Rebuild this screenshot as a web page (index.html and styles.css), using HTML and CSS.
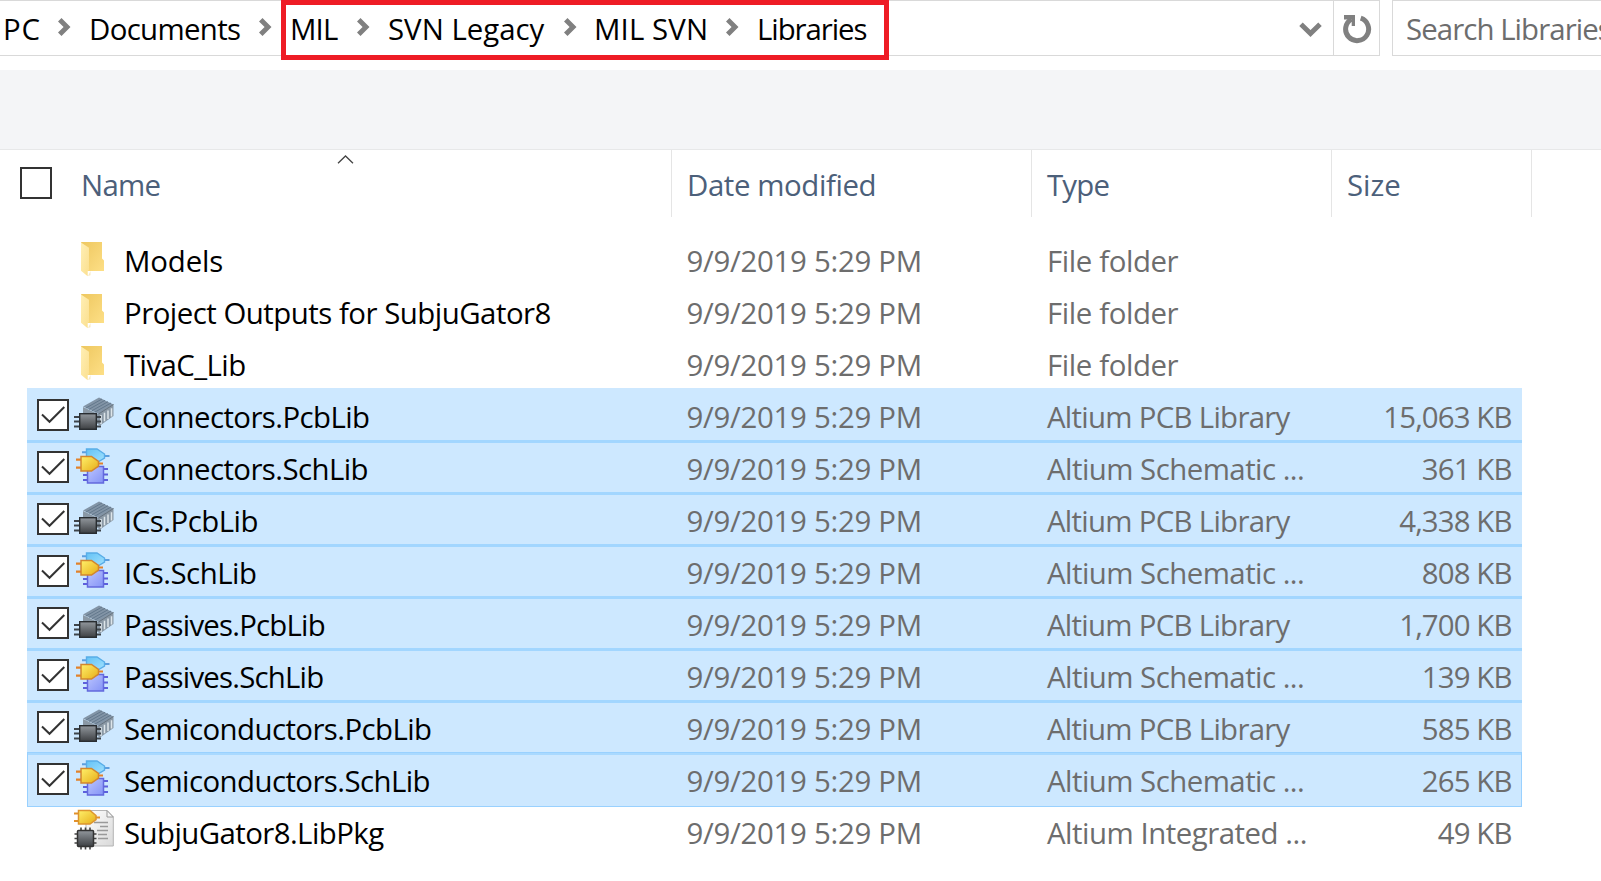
FILE: index.html
```html
<!DOCTYPE html>
<html lang="en">
<head>
<meta charset="utf-8">
<title>Libraries</title>
<link rel="stylesheet" href="styles.css">
</head>
<body>
<svg class="defs" width="0" height="0">
  <defs>
    <linearGradient id="gBack" x1="0" y1="0" x2="1" y2="1"><stop offset="0" stop-color="#eec75f"/><stop offset="1" stop-color="#fddf86"/></linearGradient>
    <linearGradient id="gFront" x1="0" y1="0" x2="1" y2="1"><stop offset="0" stop-color="#ffefb5"/><stop offset="1" stop-color="#fbdf8e"/></linearGradient>
    <linearGradient id="gChip" x1="0" y1="0" x2="0" y2="1"><stop offset="0" stop-color="#92979d"/><stop offset="1" stop-color="#3d4043"/></linearGradient>
    <linearGradient id="gGold" x1="0" y1="0" x2="1" y2="1"><stop offset="0" stop-color="#fff06a"/><stop offset="1" stop-color="#e6ad18"/></linearGradient>
    <linearGradient id="gSky" x1="0" y1="0" x2="1" y2="1"><stop offset="0" stop-color="#64c2f5"/><stop offset="1" stop-color="#a2e2ff"/></linearGradient>
    <linearGradient id="gBlue" x1="0" y1="0" x2="1" y2="1"><stop offset="0" stop-color="#bcc6ff"/><stop offset="1" stop-color="#8493f6"/></linearGradient>
    <linearGradient id="gPage" x1="0" y1="0" x2="1" y2="1"><stop offset="0" stop-color="#ffffff"/><stop offset="1" stop-color="#d9d9d9"/></linearGradient>
    <symbol id="chev" viewBox="0 0 13 18"><path fill="#808080" d="M3.5 0l9 9-9 9L0 14.5 5.6 9 0 3.5z"/></symbol>
    <symbol id="check" viewBox="0 0 32 32"><rect x="1" y="1" width="30" height="30" fill="#fff" stroke="#333" stroke-width="2"/><path d="M5 15.500l7.500 7.300L27.300 8" fill="none" stroke="#333" stroke-width="2"/></symbol>
    <symbol id="folder" viewBox="0 0 50 50">
      <path fill="url(#gBack)" d="M11 10h21v16.500l2 2V39H18z"/>
      <path fill="#f7e9c4" d="M18 44l2.500-.7V39z"/>
      <path fill="url(#gFront)" d="M11 10.500l8 5.300V38l-1.300 1v5.200L11 38.800z"/>
    </symbol>
    <symbol id="pcb" viewBox="0 0 50 50">
      <path fill="#8a98a5" d="M13 19l15 7 15.500-9.500V28L30 37.500 13 27z"/>
      <path fill="#8294a6" d="M13 18.500L29 9.500l14.500 7L28.500 26z"/>
      <path stroke="#63788c" stroke-width="1" fill="none" d="M16 20l16-9M19 21.300l16-9M22 22.700l16-9M25 24l16-9"/>
      <path stroke="#66727d" stroke-width="1" fill="none" d="M28.500 26l15-9.500"/>
      <path stroke="#dde5ea" stroke-width="1.500" fill="none" d="M31 27v9M34.500 24.700v8.500M38 22.500V31M41.500 20.300v8.200"/>
      <path stroke="#3e444a" stroke-width="2" d="M4 29h6M4 33.500h6M4 38.500h6M26 29h5M26 33.500h5M26 38.500h5"/>
      <rect x="9.700" y="25.700" width="16.600" height="15.600" fill="url(#gChip)" stroke="#292d31" stroke-width="1.400"/>
    </symbol>
    <symbol id="gate" viewBox="0 0 50 50">
      <path stroke="#e2822b" stroke-width="2.200" d="M6 19.700h6M6 27.700h6M27 23.500h6"/>
      <path d="M11 16.500h10.500l7 5v4.500l-7 5H11z" fill="url(#gGold)" stroke="#d2862e" stroke-width="1.500"/>
    </symbol>
    <symbol id="sch" viewBox="0 0 50 50">
      <path stroke="#5c9ede" stroke-width="2" d="M12 12.300h5M12 19h5M34 16h5.500"/>
      <path d="M16.500 9H27l7.500 5v4l-7.500 4.500H16.500z" fill="url(#gSky)" stroke="#58ade8" stroke-width="1.400"/>
      <path stroke="#5d60dc" stroke-width="2" d="M13 35h5M13 40h5M33 29h5M33 34.500h5M33 40h5"/>
      <rect x="17.500" y="26.500" width="16" height="16.500" fill="url(#gBlue)" stroke="#6369dd" stroke-width="1.500"/>
      <use href="#gate" width="50" height="50"/>
    </symbol>
    <symbol id="pkg" viewBox="0 0 50 50">
      <path d="M16 6.500h21l6.300 6.500v29H16z" fill="url(#gPage)" stroke="#b5b5b5" stroke-width="1"/>
      <path d="M37 6.500V13h6.300z" fill="#f5f5f5" stroke="#999" stroke-width="1"/>
      <path stroke="#999" stroke-width="1.300" d="M24 18.500h14M30 22.500h8M27 26.500h11M28 30.500h9M28 34.500h10"/>
      <path stroke="#e2912b" stroke-width="2.200" d="M4 9.500h5M4 17h5M25 13.500h5"/>
      <path d="M8.500 6.500H20l6 5v4l-6 4.500H8.500z" fill="url(#gGold)" stroke="#dc942f" stroke-width="1.500"/>
      <path stroke="#444" stroke-width="1.600" d="M11 23.500v22M15.500 23.500v22M20 23.500v22M4.500 30h22M4.500 34.500h22M4.500 39h22"/>
      <rect x="7.500" y="26.500" width="16" height="16" rx="1" fill="url(#gChip)" stroke="#333" stroke-width="1.500"/>
    </symbol>
  </defs>
</svg>

<header class="toolbar">
  <div class="address">
    <nav class="crumbs">
      <span class="ls-wide">PC</span><svg class="chev"><use href="#chev"/></svg>
      <span class="ls-67">Documents</span><svg class="chev"><use href="#chev"/></svg>
      <span class="ls-82">MIL</span><svg class="chev"><use href="#chev"/></svg>
      <span>SVN Legacy</span><svg class="chev"><use href="#chev"/></svg>
      <span class="ls-plus">MIL SVN</span><svg class="chev"><use href="#chev"/></svg>
      <span class="ls-106">Libraries</span>
    </nav>
    <svg class="dropdown" viewBox="0 0 24 16"><path d="M2 2.300l9.500 9.200L21 2.300" fill="none" stroke="#808080" stroke-width="5"/></svg>
    <div class="refresh"><svg viewBox="0 0 30 30" width="30" height="30"><path d="M18.700 4.200A11.500 11.500 0 1 1 9.500 5.100" fill="none" stroke="#808080" stroke-width="5"/><path fill="#808080" d="M2 1h11v11H9.700V5.500H2z"/></svg></div>
  </div>
  <div class="search ls-91">Search Libraries</div>
  <div class="highlight"></div>
</header>
<div class="ribbon"></div>

<div class="columns">
  <div class="col name"><span class="box"></span><span class="ls-56">Name</span><svg class="sort" viewBox="0 0 17 9"><path d="M1 8.200l7.500-7.200 7.500 7.200" fill="none" stroke="#444" stroke-width="1.300"/></svg></div>
  <div class="col ls-32">Date modified</div>
  <div class="col ls-82">Type</div>
  <div class="col">Size</div>
</div>

<main class="files">
  <div class="row"><i></i><svg><use href="#folder"/></svg><b class="ls-0">Models</b><span class="date">9/9/2019 5:29 PM</span><span class="ls-32">File folder</span><span></span></div>
  <div class="row"><i></i><svg><use href="#folder"/></svg><b class="ls-50">Project Outputs for SubjuGator8</b><span class="date">9/9/2019 5:29 PM</span><span class="ls-32">File folder</span><span></span></div>
  <div class="row"><i></i><svg><use href="#folder"/></svg><b>TivaC_Lib</b><span class="date">9/9/2019 5:29 PM</span><span class="ls-32">File folder</span><span></span></div>
  <div class="row sel first"><svg class="tick"><use href="#check"/></svg><svg><use href="#pcb"/></svg><b>Connectors.PcbLib</b><span class="date">9/9/2019 5:29 PM</span><span class="ls-75">Altium PCB Library</span><span class="size">15,063 KB</span></div>
  <div class="row sel"><svg class="tick"><use href="#check"/></svg><svg><use href="#sch"/></svg><b>Connectors.SchLib</b><span class="date">9/9/2019 5:29 PM</span><span class="ls-53">Altium Schematic ...</span><span class="size">361 KB</span></div>
  <div class="row sel"><svg class="tick"><use href="#check"/></svg><svg><use href="#pcb"/></svg><b class="ls-50">ICs.PcbLib</b><span class="date">9/9/2019 5:29 PM</span><span class="ls-75">Altium PCB Library</span><span class="size">4,338 KB</span></div>
  <div class="row sel"><svg class="tick"><use href="#check"/></svg><svg><use href="#sch"/></svg><b class="ls-50">ICs.SchLib</b><span class="date">9/9/2019 5:29 PM</span><span class="ls-53">Altium Schematic ...</span><span class="size">808 KB</span></div>
  <div class="row sel"><svg class="tick"><use href="#check"/></svg><svg><use href="#pcb"/></svg><b class="ls-82">Passives.PcbLib</b><span class="date">9/9/2019 5:29 PM</span><span class="ls-75">Altium PCB Library</span><span class="size">1,700 KB</span></div>
  <div class="row sel"><svg class="tick"><use href="#check"/></svg><svg><use href="#sch"/></svg><b class="ls-82">Passives.SchLib</b><span class="date">9/9/2019 5:29 PM</span><span class="ls-53">Altium Schematic ...</span><span class="size">139 KB</span></div>
  <div class="row sel"><svg class="tick"><use href="#check"/></svg><svg><use href="#pcb"/></svg><b>Semiconductors.PcbLib</b><span class="date">9/9/2019 5:29 PM</span><span class="ls-75">Altium PCB Library</span><span class="size">585 KB</span></div>
  <div class="row sel last"><svg class="tick"><use href="#check"/></svg><svg><use href="#sch"/></svg><b>Semiconductors.SchLib</b><span class="date">9/9/2019 5:29 PM</span><span class="ls-53">Altium Schematic ...</span><span class="size">265 KB</span></div>
  <div class="row"><i></i><svg><use href="#pkg"/></svg><b>SubjuGator8.LibPkg</b><span class="date">9/9/2019 5:29 PM</span><span class="ls-50">Altium Integrated ...</span><span class="size">49 KB</span></div>
</main>
</body>
</html>
```
FILE: styles.css
```css
* { box-sizing: border-box; }
body {
  margin: 0;
  width: 1601px;
  height: 881px;
  overflow: hidden;
  background: #fff;
  font-family: "Open Sans", "Noto Sans", sans-serif;
  font-size: 29.4px;
  color: #000;
  white-space: nowrap;
}
.defs { position: absolute; }

/* letter spacing */
.ls-wide { letter-spacing: .8px; }
.ls-plus { letter-spacing: .12px; }
.ls-32 { letter-spacing: -.4px; }
.ls-56 { letter-spacing: -.75px; }
.ls-67 { letter-spacing: -.67px; }
.ls-75 { letter-spacing: -.71px; }
.ls-82 { letter-spacing: -.82px; }
.ls-91 { letter-spacing: -.93px; }
.ls-106 { letter-spacing: -1.06px; }
.ls-53 { letter-spacing: -.53px; }
.ls-50 { letter-spacing: -.48px; }

/* address bar */
.toolbar { position: relative; display: flex; height: 70px; }
.address {
  display: flex;
  width: 1380px;
  height: 56px;
  border: 1px solid #d9d9d9;
  border-left: 0;
}
.crumbs {
  display: grid;
  grid-template-columns: 55px 31px 170px 31px 67px 31px 175.5px 30.5px 132px 31px 1fr;
  grid-template-rows: 54px;
  width: 1299px;
  padding-left: 3px;
  line-height: 57px;
}
.chev { width: 13px; height: 18px; margin-top: 16.5px; }
.dropdown { width: 24px; height: 16px; margin-top: 21px; flex: none; }
.refresh {
  width: 46px;
  margin-left: 10px;
  border-left: 1px solid #d9d9d9;
  padding: 13px 0 0 8px;
  flex: none;
}
.refresh svg { display: block; }
.search {
  flex: 1;
  height: 56px;
  margin-left: 12px;
  padding-left: 13px;
  border: 1px solid #d9d9d9;
  border-right: 0;
  line-height: 57px;
  color: #6d6d6d;
  overflow: hidden;
}
.highlight {
  position: absolute;
  left: 281px;
  top: 0;
  width: 608px;
  height: 60px;
  border: 5px solid #ee1c25;
}
.ribbon { height: 80px; background: #f4f5f7; border-bottom: 1px solid #e7e8e9; }

/* column headings */
.columns {
  display: grid;
  grid-template-columns: 672px 360px 300px 200px;
  grid-template-rows: 67px;
  height: 67px;
  line-height: 71px;
  color: #4c607a;
}
.col { position: relative; border-right: 1px solid #e5e5e5; padding-left: 15px; }
.name { display: flex; padding-left: 20px; }
.box { width: 32px; height: 32px; margin: 17px 29px 0 0; border: 2px solid #333; }
.sort { position: absolute; left: 337px; top: 5px; width: 17px; height: 9px; }

/* file rows */
.files { padding: 15px 0 0 27px; }
.row {
  display: grid;
  grid-template-columns: 43px 54px 562.5px 360.5px 292.5px 172px;
  grid-template-rows: 52px;
  width: 1495px;
  height: 52px;
  line-height: 59px;
  color: #6d6d6d;
}
.row svg { width: 50px; height: 50px; }
.row .tick { width: 32px; height: 32px; margin: 11px 0 0 10px; }
.row b { font-weight: 400; color: #000; letter-spacing: -.57px; }
.row b.ls-0 { letter-spacing: -.15px; }
.row b.ls-50 { letter-spacing: -.5px; }
.row b.ls-82 { letter-spacing: -.8px; }
.date { letter-spacing: -.28px; }
.size { text-align: right; letter-spacing: -.9px; }
.sel { background: linear-gradient(#a2d6ff 3px, #cde8ff 3px); }
.sel.first { background: #cde8ff; }
.sel.last {
  height: 55px;
  margin-bottom: -3px;
  background: linear-gradient(#99d1ff 1px, #a9d9ff 1px, #a9d9ff 3px, #cde8ff 3px);
  box-shadow: inset 0 0 0 1px #99d1ff;
}
```
